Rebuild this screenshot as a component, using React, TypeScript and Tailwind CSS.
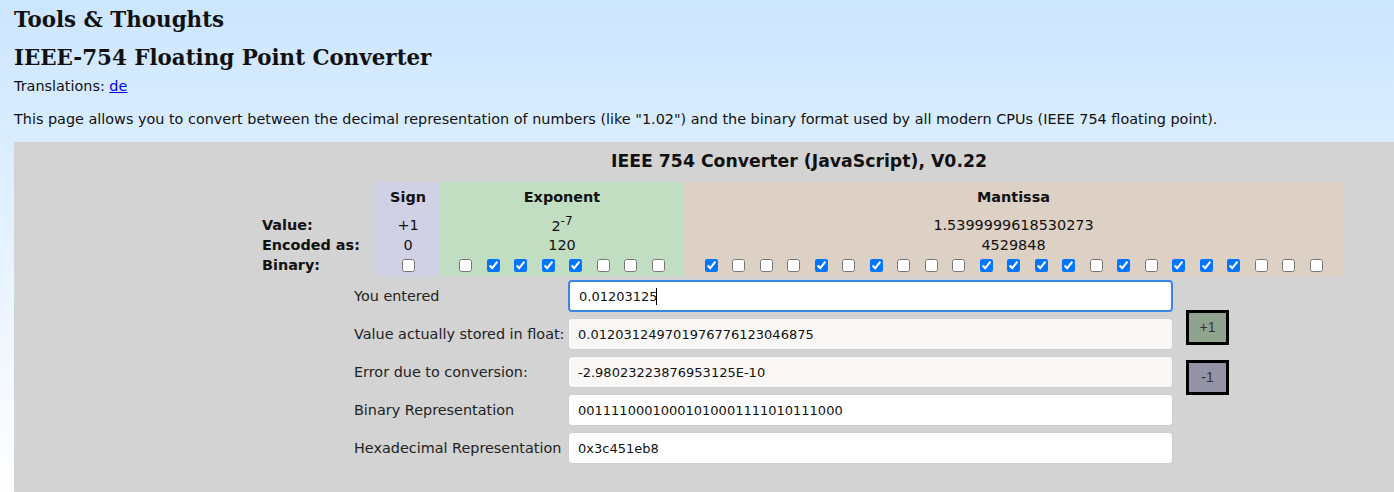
import React from "react";

const expBits = [0, 1, 1, 1, 1, 0, 0, 0];
const manBits = [1, 0, 0, 0, 1, 0, 1, 0, 0, 0, 1, 1, 1, 1, 0, 1, 0, 1, 1, 1, 0, 0, 0];

function Bit({ on }: { on: number }) {
    return (
        <span className="w-[27.5px] flex justify-center shrink-0">
            <input type="checkbox" defaultChecked={!!on} className="m-0 w-[13px] h-[13px]" />
        </span>
    );
}

const rows = [
    { label: "You entered", value: "0.01203125", kind: "focus" },
    { label: "Value actually stored in float:", value: "0.012031249701976776123046875", kind: "ro" },
    { label: "Error due to conversion:", value: "-2.98023223876953125E-10", kind: "ro" },
    { label: "Binary Representation", value: "00111100010001010001111010111000", kind: "plain" },
    { label: "Hexadecimal Representation", value: "0x3c451eb8", kind: "plain" },
];

export default function App() {
    return (
        <div className="min-h-[492px] bg-gradient-to-b from-[#cce6ff] to-[#ffffff] font-['DejaVu_Sans',sans-serif] text-[14.4px] text-[#111] overflow-hidden">
            <div className="pl-[14px] pt-[6px]">
                <h1 className="font-['DejaVu_Serif',serif] font-bold text-[21.4px] leading-[28px]">Tools &amp; Thoughts</h1>
                <h2 className="mt-[10px] font-['DejaVu_Serif',serif] font-bold text-[21.4px] leading-[28px]">IEEE-754 Floating Point Converter</h2>
                <p className="mt-[4px] leading-[20px]">
                    Translations: <a href="#" className="text-[#0000ee] underline">de</a>
                </p>
                <p className="mt-[13px] leading-[20px]">
                    This page allows you to convert between the decimal representation of numbers (like "1.02") and the binary format used by all modern CPUs (IEEE 754 floating point).
                </p>
            </div>

            {/* Converter box */}
            <div className="ml-[14px] mt-[13px] bg-[#d3d3d3] h-[360px] pt-[8px]">
                <div className="ml-[241px] w-[1088px]">
                    <div className="text-center font-bold text-[17.3px] leading-[22px]">IEEE 754 Converter (JavaScript), V0.22</div>

                    {/* Bit table */}
                    <div className="mt-[10px] flex pl-[7px]">
                        <div className="w-[114px] font-bold flex flex-col">
                            <div className="h-[32px]" />
                            <div className="h-[22px] flex items-center pt-[1px]">Value:</div>
                            <div className="h-[19px] flex items-center">Encoded as:</div>
                            <div className="h-[21px] flex items-center">Binary:</div>
                        </div>

                        <div className="w-[64px] bg-[#d1d1e5] flex flex-col items-center">
                            <div className="h-[32px] flex items-center font-bold">Sign</div>
                            <div className="h-[22px] flex items-center pt-[1px]">+1</div>
                            <div className="h-[19px] flex items-center">0</div>
                            <div className="h-[21px] flex items-center"><Bit on={0} /></div>
                        </div>

                        <div className="w-[244px] bg-[#c2dec2] flex flex-col items-center">
                            <div className="h-[32px] flex items-center font-bold">Exponent</div>
                            <div className="h-[22px] flex items-center pt-[4px]">
                                <span>2<sup className="text-[12px]">-7</sup></span>
                            </div>
                            <div className="h-[19px] flex items-center">120</div>
                            <div className="h-[21px] flex items-center">
                                {expBits.map((b, i) => <Bit key={i} on={b} />)}
                            </div>
                        </div>

                        <div className="w-[659px] bg-[#ddd0c5] flex flex-col items-center">
                            <div className="h-[32px] flex items-center font-bold">Mantissa</div>
                            <div className="h-[22px] flex items-center pt-[1px]">1.5399999618530273</div>
                            <div className="h-[19px] flex items-center">4529848</div>
                            <div className="h-[21px] flex items-center">
                                {manBits.map((b, i) => <Bit key={i} on={b} />)}
                            </div>
                        </div>
                    </div>
                </div>

                {/* Fields */}
                <div className="ml-[340px] mt-[4px] flex items-start">
                    <div className="flex flex-col gap-[6px]">
                        {rows.map((r) => (
                            <div key={r.label} className="flex items-center">
                                <span className="w-[214px] text-[#222] pt-[2px]">{r.label}</span>
                                <div className="relative">
                                    <input
                                        readOnly
                                        value={r.value}
                                        className={`w-[605px] h-[32px] rounded-[4px] px-[9px] text-[13px] text-[#111] outline-none ${
                                            r.kind === "focus"
                                                ? "bg-white border-2 border-[#3b84e4]"
                                                : r.kind === "ro"
                                                ? "bg-[#f9f8f6] border border-[#cfcfcf]"
                                                : "bg-white border border-[#cfcfcf]"
                                        }`}
                                    />
                                    {r.kind === "focus" && (
                                        <span className="absolute left-[88px] top-[8px] w-[1px] h-[17px] bg-black" />
                                    )}
                                </div>
                            </div>
                        ))}
                    </div>
                    <div className="ml-[13px] mt-[30px] flex flex-col gap-[15px]">
                        <button className="w-[43px] h-[35px] border-[3px] border-black bg-[#90a38f] text-[#333] text-[14px] font-['Liberation_Sans',sans-serif]">+1</button>
                        <button className="w-[43px] h-[35px] border-[3px] border-black bg-[#9393a5] text-[#333] text-[14px] font-['Liberation_Sans',sans-serif]">-1</button>
                    </div>
                </div>
            </div>
        </div>
    );
}
